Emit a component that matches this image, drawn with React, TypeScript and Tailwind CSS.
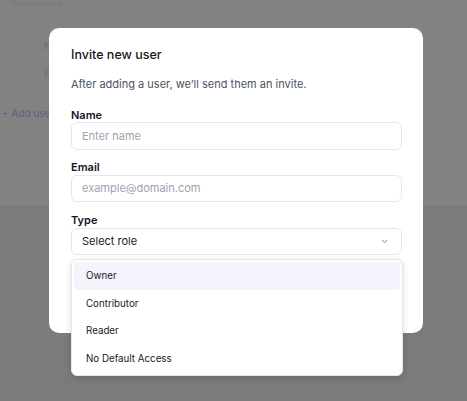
import React from "react";

function Chevron() {
  return (
    <svg width="9" height="9" viewBox="0 0 24 24" fill="none" stroke="#6b7280" strokeWidth="2.5" strokeLinecap="round" strokeLinejoin="round">
      <path d="m6 9 6 6 6-6" />
    </svg>
  );
}

export default function App() {
  const font = { fontFamily: "Inter, 'Noto Sans', sans-serif" };
  return (
    <div className="relative w-[467px] h-[401px] overflow-hidden bg-[#7b7b7b]" style={font}>
      {/* dimmed page behind */}
      <div className="flex flex-col h-full">
        <div className="h-[205px] bg-[#828282]">
          <div className="pl-[10px] text-[7px] leading-[8px] text-[#777777]">Team members</div>
          <div className="pl-[44px] mt-[32px] text-[10px] leading-[12px] text-[#6e6e6e]">Name</div>
          <div className="pl-[44px] mt-[16px] text-[10px] leading-[12px] text-[#6e6e6e]">Email</div>
          <div className="pl-[2px] mt-[27px] text-[10px] leading-[12px] text-[#665d88]">+ Add user</div>
        </div>
        <div className="flex-1 bg-[#7b7b7b]" />
      </div>

      {/* modal */}
      <div className="absolute left-[49px] top-[28px] w-[374px] h-[305px] bg-white rounded-[10px] pl-[22px] pr-[21px] pt-[17px]">
        <div className="text-[12.5px] leading-[20px] text-[#18181b] font-medium">Invite new user</div>
        <div className="mt-[9px] text-[11px] leading-[20px] text-[#4b5563]">After adding a user, we’ll send them an invite.</div>

        <div className="mt-[14px] text-[11px] leading-[14px] font-semibold text-[#111827]">Name</div>
        <div className="h-[28px] border border-[#e5e7eb] rounded-[6px] flex items-center px-[10px] text-[11px] text-[#9ca3af]">Enter name</div>

        <div className="mt-[10px] text-[11px] leading-[14px] font-semibold text-[#111827]">Email</div>
        <div className="mt-[1px] h-[27px] border border-[#e5e7eb] rounded-[6px] flex items-center px-[10px] text-[11px] text-[#9ca3af]">example@domain.com</div>

        <div className="mt-[11px] text-[11px] leading-[14px] font-semibold text-[#111827]">Type</div>
        <div className="mt-[1px] h-[27px] border border-[#e5e7eb] rounded-[6px] flex items-center justify-between pl-[10px] pr-[12px] text-[11px] text-[#18181b]">
          <span>Select role</span>
          <Chevron />
        </div>
      </div>

      {/* dropdown */}
      <div className="absolute left-[71px] top-[259px] w-[332px] bg-white rounded-[6px] border border-[#e5e7eb] shadow-[0_2px_6px_rgba(0,0,0,0.15)] p-[2px] flex flex-col text-[9.75px] text-[#18181b]">
        <div className="h-[28px] rounded-[4px] bg-[#f5f3fc] flex items-center pl-[12px]">Owner</div>
        <div className="h-[28px] flex items-center pl-[12px]">Contributor</div>
        <div className="h-[27px] flex items-center pl-[12px]">Reader</div>
        <div className="h-[28px] flex items-center pl-[12px]">No Default Access</div>
      </div>
    </div>
  );
}
